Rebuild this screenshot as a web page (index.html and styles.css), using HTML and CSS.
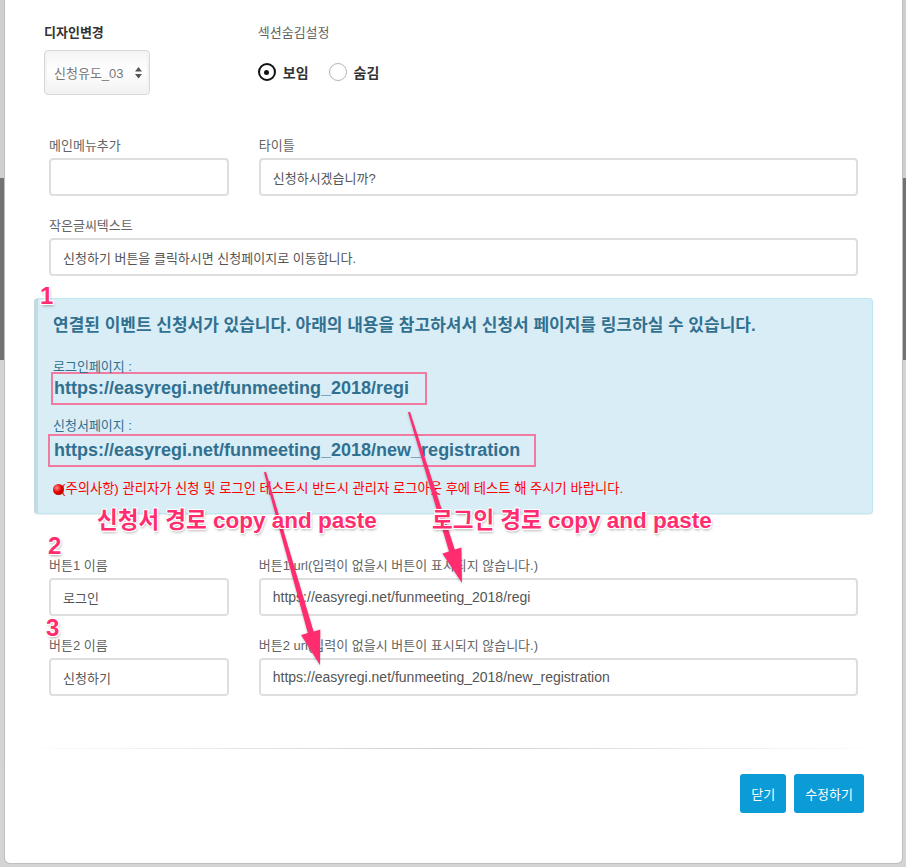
FILE: index.html
```html
<!DOCTYPE html>
<html lang="ko">

<head>
    <meta charset="UTF-8">
    <meta name="viewport" content="width=device-width, initial-scale=1.0">
    <title>섹션 수정</title>

    <link rel="stylesheet" href="styles.css">
</head>

<body>
    <div class="modal">
        <div class="modal-body">

            <!-- 디자인 / 섹션 숨김 -->
            <div class="row">
                <div class="col-design">
                    <label class="lbl lbl-strong">디자인변경</label>
                    <div class="select-box">
                        <span>신청유도_03</span>
                        <svg class="select-arrows" width="7" height="12" viewBox="0 0 7 12">
                            <path d="M3.5 0 L7 4.5 L0 4.5 Z" fill="#555" />
                            <path d="M0 7 L7 7 L3.5 11.5 Z" fill="#555" />
                        </svg>
                    </div>
                </div>
                <div class="col-hide">
                    <label class="lbl">섹션숨김설정</label>
                    <div class="radios">
                        <span class="radio checked"></span>
                        <span class="radio-text">보임</span>
                        <span class="radio"></span>
                        <span class="radio-text">숨김</span>
                    </div>
                </div>
            </div>

            <div class="row form-row first">
                <div class="col-3">
                    <label class="lbl">메인메뉴추가</label>
                    <input class="field" type="text" value="">
                </div>
                <div class="col-9">
                    <label class="lbl">타이틀</label>
                    <input class="field" type="text" value="신청하시겠습니까?">
                </div>
            </div>

            <div class="row form-row">
                <div class="col-12">
                    <label class="lbl">작은글씨텍스트</label>
                    <input class="field" type="text" value="신청하기 버튼을 클릭하시면 신청페이지로 이동합니다.">
                </div>
            </div>

            <!-- 연결된 신청서 안내 -->
            <div class="alert">
                <div class="alert-title">연결된 이벤트 신청서가 있습니다. 아래의 내용을 참고하셔서 신청서 페이지를 링크하실 수 있습니다.</div>
                <div class="alert-lbl">로그인페이지 :</div>
                <div class="url-box url-login">https://easyregi.net/funmeeting_2018/regi</div>
                <div class="alert-lbl second">신청서페이지 :</div>
                <div class="url-box url-reg">https://easyregi.net/funmeeting_2018/new_registration</div>
                <div class="warn"><span class="ball"></span>(주의사항) 관리자가 신청 및 로그인 테스트시 반드시 관리자 로그아웃 후에 테스트 해 주시기 바랍니다.</div>
            </div>

            <div class="row form-row after-alert">
                <div class="col-3">
                    <label class="lbl">버튼1 이름</label>
                    <input class="field" type="text" value="로그인">
                </div>
                <div class="col-9">
                    <label class="lbl">버튼1 url(입력이 없을시 버튼이 표시되지 않습니다.)</label>
                    <input class="field field-url" type="text" value="https://easyregi.net/funmeeting_2018/regi">
                </div>
            </div>

            <div class="row form-row">
                <div class="col-3">
                    <label class="lbl">버튼2 이름</label>
                    <input class="field" type="text" value="신청하기">
                </div>
                <div class="col-9">
                    <label class="lbl">버튼2 url(입력이 없을시 버튼이 표시되지 않습니다.)</label>
                    <input class="field field-url" type="text" value="https://easyregi.net/funmeeting_2018/new_registration">
                </div>
            </div>
        </div>

        <div class="divider"></div>
        <div class="modal-footer">
            <button class="btn">닫기</button>
            <button class="btn">수정하기</button>
        </div>
    </div>

    <!-- 캡처 위 주석 (화살표, 번호) -->
    <svg class="marks" width="906" height="867" viewBox="0 0 906 867">
        <polygon fill="#ff2d6f" points="408,412.3 449,551.4 442.4,553.5 462,583 461.4,547.5 454.8,549.6 410,411.7" />
        <polygon fill="#ff2d6f" points="264,472.3 307.8,633.1 301.1,635 320,665 320.3,629.6 313.6,631.5 266,471.7" />
    </svg>
    <span class="note num n1">1</span>
    <span class="note num n2">2</span>
    <span class="note num n3">3</span>
    <span class="note note-reg">신청서 경로 copy and paste</span>
    <span class="note note-login">로그인 경로 copy and paste</span>
</body>

</html>
```

FILE: styles.css
```css
* {
    box-sizing: border-box;
}

body {
    margin: 0;
    height: 867px;
    overflow: hidden;
    position: relative;
    font-family: "Liberation Sans", "Noto Sans CJK KR", sans-serif;
    background: linear-gradient(to bottom, #cfcfcf 0, #cfcfcf 178px, #727272 178px, #727272 360px, #d4d4d4 360px);
}

.modal {
    margin-left: 4px;
    width: 899px;
    background: #fff;
    border: 1px solid rgba(0, 0, 0, 0.25);
    border-top: none;
    border-radius: 0 0 6px 6px;
}

.modal-body {
    padding: 24px 29px 52px;
}

.row {
    display: flex;
}

.col-3 {
    width: 25%;
    padding: 0 15px;
}

.col-9 {
    width: 75%;
    padding: 0 15px;
}

.col-12 {
    width: 100%;
    padding: 0 15px;
}

.col-design {
    width: 25%;
    padding-left: 10px;
}

.col-hide {
    width: 75%;
    padding-left: 14px;
}

.lbl {
    display: block;
    font-size: 13px;
    line-height: 18px;
    color: #646464;
    margin-bottom: 3px;
}

.lbl-strong {
    font-weight: bold;
    color: #333;
    margin-bottom: 8px;
}

.select-box {
    width: 106px;
    height: 45px;
    display: flex;
    align-items: center;
    justify-content: space-between;
    padding: 0 7px 0 9px;
    font-size: 13px;
    color: #777;
    border: 1px solid #d8d8d8;
    border-radius: 4px;
    background: linear-gradient(to bottom, #f4f4f4, #ffffff 45%, #f1f1f1);
    box-shadow: inset 0 0 0 2px #f3f3f3;
}

.radios {
    display: flex;
    align-items: center;
    padding-top: 12px;
    height: 42px;
}

.radio {
    width: 18px;
    height: 18px;
    border-radius: 50%;
    border: 1.5px solid #b5b5b5;
    display: flex;
    align-items: center;
    justify-content: center;
}

.radio.checked {
    border: 2px solid #111;
}

.radio.checked::after {
    content: "";
    width: 5px;
    height: 5px;
    border-radius: 50%;
    background: #111;
}

.radio-text {
    font-size: 14px;
    font-weight: bold;
    color: #333;
    margin: 0 20px 0 7px;
}

.form-row {
    margin-top: 21px;
}

.form-row.first {
    margin-top: 42px;
}

.form-row.after-alert {
    margin-top: 43px;
}

.field {
    display: block;
    width: 100%;
    height: 38px;
    border: 2px solid #dedede;
    border-radius: 4px;
    padding: 0 12px;
    font-family: "Liberation Sans", "Noto Sans CJK KR", sans-serif;
    font-size: 13px;
    color: #555;
    background: #fff;
}

.field-url {
    font-size: 14px;
}

.alert {
    margin-top: 22px;
    background: #d9edf7;
    border: 1px solid #bce8f1;
    border-left: 4px solid #c3d9e3;
    border-radius: 4px;
    padding: 14px 15px 16px;
    color: #31708f;
    box-shadow: 0 1px 1px rgba(0, 0, 0, 0.08);
}

.alert-title {
    font-size: 17px;
    font-weight: bold;
    line-height: 26px;
}

.alert-lbl {
    font-size: 13px;
    line-height: 14px;
    margin-top: 21px;
}

.alert-lbl.second {
    margin-top: 14px;
}

.url-box {
    width: max-content;
    font-size: 18px;
    font-weight: bold;
    line-height: 29px;
    border: 2px solid #f07aa0;
}

.url-login {
    margin: -2px 0 0 -2px;
    padding: 0 16px 0 1px;
}

.url-reg {
    margin: 1px 0 0 -5px;
    padding: 0 14px 0 4px;
}

.warn {
    margin-top: 14px;
    font-size: 13.3px;
    line-height: 16px;
    color: #f00;
    display: flex;
    align-items: center;
}

.ball {
    width: 11px;
    height: 11px;
    border-radius: 50%;
    margin-right: -3px;
    position: relative;
    z-index: 1;
    background: radial-gradient(circle at 35% 35%, #ff8a8a 0, #e60000 45%, #8a0000 100%);
}

.divider {
    height: 1px;
    margin: 0 13px 0 7px;
    background: linear-gradient(to right, rgba(200, 200, 200, 0), #cfcfcf 50%, rgba(200, 200, 200, 0));
}

.modal-footer {
    display: flex;
    justify-content: flex-end;
    gap: 8px;
    padding: 25px 38px 50px 0;
}

.btn {
    height: 39px;
    padding: 0 11px;
    background: #0b9bd7;
    color: #fff;
    border: none;
    border-radius: 3px;
    font-family: "Liberation Sans", "Noto Sans CJK KR", sans-serif;
    font-size: 13px;
}

.marks {
    position: absolute;
    left: 0;
    top: 0;
    pointer-events: none;
    filter: drop-shadow(0 1px 1px rgba(0, 0, 0, 0.25));
}

.note {
    position: absolute;
    font-weight: bold;
    color: #ff2d6f;
    white-space: nowrap;
    text-shadow: 1px 0 0 #fff, -1px 0 0 #fff, 0 1px 0 #fff, 0 -1px 0 #fff,
        1px 1px 0 #fff, -1px -1px 0 #fff, 1px -1px 0 #fff, -1px 1px 0 #fff,
        1px 2px 3px rgba(0, 0, 0, 0.35);
}

.num {
    font-size: 24px;
    line-height: 18px;
}

.n1 {
    left: 40px;
    top: 287px;
}

.n2 {
    left: 48px;
    top: 537px;
}

.n3 {
    left: 46px;
    top: 619px;
}

.note-reg,
.note-login {
    font-size: 22.5px;
    line-height: 28px;
    top: 507px;
}

.note-reg {
    left: 97px;
}

.note-login {
    left: 432px;
}
```
